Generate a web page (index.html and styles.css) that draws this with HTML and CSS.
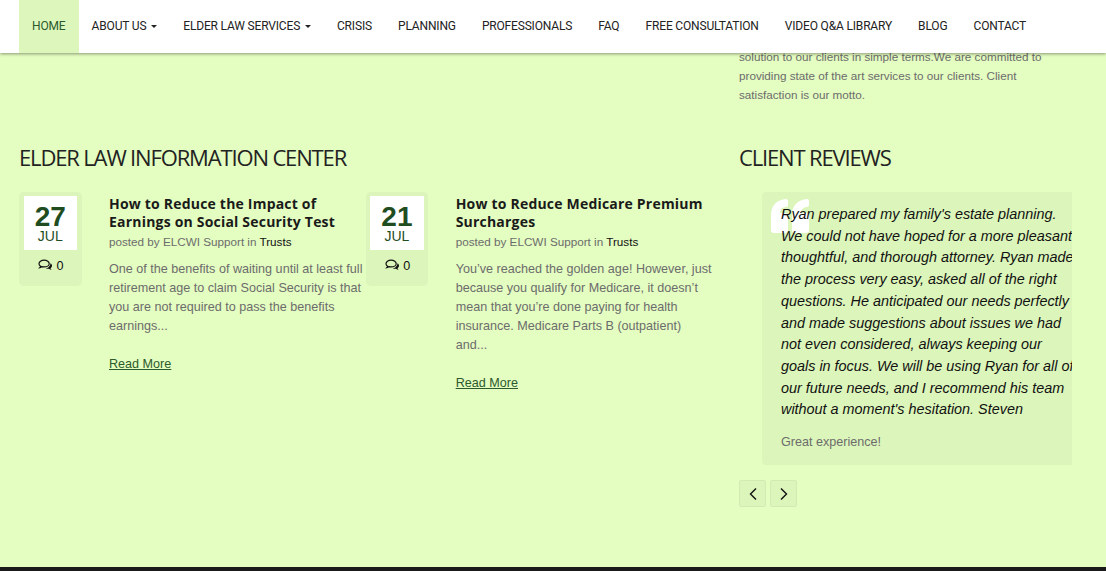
FILE: index.html
```html
<!DOCTYPE html>
<html lang="en">
<head>
  <meta charset="UTF-8">
  <meta name="viewport" content="width=device-width, initial-scale=1.0">
  <title>Elder Law Information Center</title>
  <link rel="stylesheet" href="styles.css">
</head>
<body>

  <nav class="navbar">
    <a class="nav-link active" href="#">HOME</a>
    <a class="nav-link" href="#">ABOUT US <span class="caret"></span></a>
    <a class="nav-link" href="#">ELDER LAW SERVICES <span class="caret"></span></a>
    <a class="nav-link" href="#">CRISIS</a>
    <a class="nav-link" href="#">PLANNING</a>
    <a class="nav-link" href="#">PROFESSIONALS</a>
    <a class="nav-link" href="#">FAQ</a>
    <a class="nav-link" href="#">FREE CONSULTATION</a>
    <a class="nav-link" href="#">VIDEO Q&amp;A LIBRARY</a>
    <a class="nav-link" href="#">BLOG</a>
    <a class="nav-link" href="#">CONTACT</a>
  </nav>

  <main class="page">
    <p class="intro">solution to our clients in simple terms.We are committed to providing state of the art services to our clients. Client satisfaction is our motto.</p>

    <div class="columns">
      <section>
        <h2 class="section-title">ELDER LAW INFORMATION CENTER</h2>
        <div class="posts">
          <article class="post">
            <div class="date-box">
              <div class="date">
                <span class="day">27</span>
                <span class="month">JUL</span>
              </div>
              <div class="comments">
                <svg class="comment-icon" viewBox="0 0 16 14" aria-hidden="true"><path d="M6.5 1.2C3.4 1.2 1 2.9 1 5c0 1.1.7 2.1 1.8 2.8-.2.6-.5 1.1-.9 1.5 1-.2 1.8-.6 2.5-1.1.7.2 1.4.3 2.1.3 3.1 0 5.5-1.7 5.5-3.5S9.600 1.2 6.5 1.2z" fill="none" stroke="#111" stroke-width="1.3"/><path d="M13.3 4.6c1.1.7 1.7 1.6 1.7 2.7 0 1-.6 1.9-1.6 2.6.2.7.6 1.4 1.3 2-1.2-.2-2.3-.7-3.1-1.4-.9.2-2.4.1-3.4-.4 2.6-.2 5.1-2.3 5.1-5.5z" fill="#111"/></svg>
                0
              </div>
            </div>
            <div class="post-body">
              <h3 class="post-title">How to Reduce the Impact of Earnings on Social Security Test</h3>
              <p class="meta">posted by ELCWI Support in <a href="#">Trusts</a></p>
              <p class="excerpt">One of the benefits of waiting until at least full retirement age to claim Social Security is that you are not required to pass the benefits earnings...</p>
              <a class="read-more" href="#">Read More</a>
            </div>
          </article>

          <article class="post">
            <div class="date-box">
              <div class="date">
                <span class="day">21</span>
                <span class="month">JUL</span>
              </div>
              <div class="comments">
                <svg class="comment-icon" viewBox="0 0 16 14" aria-hidden="true"><path d="M6.5 1.2C3.4 1.2 1 2.9 1 5c0 1.1.7 2.1 1.8 2.8-.2.6-.5 1.1-.9 1.5 1-.2 1.8-.6 2.5-1.1.7.2 1.4.3 2.1.3 3.1 0 5.5-1.7 5.5-3.5S9.600 1.2 6.5 1.2z" fill="none" stroke="#111" stroke-width="1.3"/><path d="M13.3 4.6c1.1.7 1.7 1.6 1.7 2.7 0 1-.6 1.9-1.6 2.6.2.7.6 1.4 1.3 2-1.2-.2-2.3-.7-3.1-1.4-.9.2-2.4.1-3.4-.4 2.6-.2 5.1-2.3 5.1-5.5z" fill="#111"/></svg>
                0
              </div>
            </div>
            <div class="post-body">
              <h3 class="post-title">How to Reduce Medicare Premium Surcharges</h3>
              <p class="meta">posted by ELCWI Support in <a href="#">Trusts</a></p>
              <p class="excerpt">You’ve reached the golden age! However, just because you qualify for Medicare, it doesn’t mean that you’re done paying for health insurance. Medicare Parts B (outpatient) and...</p>
              <a class="read-more" href="#">Read More</a>
            </div>
          </article>
        </div>
      </section>

      <section class="reviews">
        <h2 class="section-title">CLIENT REVIEWS</h2>
        <div class="review-card">
          <svg class="quote-mark" viewBox="0 0 38 34" aria-hidden="true"><path d="M0 16C0 6 6 1 15 0q2 0 2 2v4q0 2-2 2c-4 0-6 3-6 6h5q3 0 3 3v14q0 3-3 3H3q-3 0-3-3zM21 16c0-10 6-15 15-16q2 0 2 2v4q0 2-2 2c-4 0-6 3-6 6h5q3 0 3 3v14q0 3-3 3H24q-3 0-3-3z" fill="#fff"/></svg>
          <p class="review-text">Ryan prepared my family's estate planning. We could not have hoped for a more pleasant, thoughtful, and thorough attorney. Ryan made the process very easy, asked all of the right questions. He anticipated our needs perfectly and made suggestions about issues we had not even considered, always keeping our goals in focus. We will be using Ryan for all of our future needs, and I recommend his team without a moment's hesitation. Steven</p>
          <p class="review-title">Great experience!</p>
        </div>
        <div class="carousel-btns">
          <button class="carousel-btn"><svg viewBox="0 0 10 14" aria-hidden="true"><path d="M8 1.5 2.5 7 8 12.5" fill="none" stroke="#111" stroke-width="1.4"/></svg></button>
          <button class="carousel-btn"><svg viewBox="0 0 10 14" aria-hidden="true"><path d="M2 1.5 7.5 7 2 12.5" fill="none" stroke="#111" stroke-width="1.4"/></svg></button>
        </div>
      </section>
    </div>
  </main>

  <footer class="footer"></footer>

</body>
</html>
```

FILE: styles.css
```css
html, body {
  height: 100%;
  margin: 0;
  overflow: hidden;
}

body {
  display: flex;
  flex-direction: column;
  font-family: "Liberation Sans", Arial, sans-serif;
  font-size: 12.6px;
  line-height: 19px;
  background-color: #e4fdc1;
  color: #6c6c6c;
}

a {
  color: #111;
  text-decoration: none;
}

.navbar {
  position: absolute;
  top: 0;
  left: 0;
  right: 0;
  z-index: 10;
  display: flex;
  height: 53px;
  padding-left: 19px;
  background-color: #fff;
  box-shadow: 0 1px 3px rgba(0, 0, 0, 0.4);
}

.nav-link {
  display: block;
  padding: 0 13.05px;
  font-family: Roboto, sans-serif;
  font-size: 12px;
  line-height: 52px;
  letter-spacing: -0.17px;
  color: #222;
}

.nav-link.active {
  background-color: #ddf6bc;
  color: #2c5a2c;
}

.caret {
  display: inline-block;
  margin-left: 2px;
  vertical-align: middle;
  border-top: 3px solid #222;
  border-left: 3px solid transparent;
  border-right: 3px solid transparent;
}

.page {
  flex: 1;
  padding: 47px 34px 0 19px;
}

.intro {
  width: 320px;
  margin: 0 0 0 720px;
  font-size: 11.7px;
}

.columns {
  display: grid;
  grid-template-columns: 720px 333px;
  margin-top: 38px;
}

.section-title {
  margin: 0 0 20px;
  font-family: "Open Sans", sans-serif;
  font-size: 22px;
  font-weight: 400;
  line-height: 30px;
  letter-spacing: -1.15px;
  color: #222;
}

.posts {
  display: grid;
  grid-template-columns: 346.7px 347px;
  margin-top: 1px;
}

.post {
  display: flex;
  align-items: flex-start;
  gap: 27.5px;
}

.date-box {
  flex: none;
  box-sizing: border-box;
  width: 62.5px;
  height: 94px;
  padding: 4px 4.5px;
  border-radius: 5px;
  background-color: #dcf5ba;
  text-align: center;
}

.date {
  display: flex;
  flex-direction: column;
  align-items: center;
  height: 54px;
  background-color: #fff;
  color: #1f4d1f;
}

.day {
  margin-top: 8px;
  font-size: 28px;
  font-weight: 700;
  line-height: 26px;
}

.month {
  font-size: 14px;
  line-height: 13px;
}

.comments {
  margin-top: 7px;
  color: #111;
}

.comment-icon {
  width: 15px;
  height: 13px;
  margin-left: 1px;
  vertical-align: -2px;
}

.post-body {
  flex: 1;
  min-width: 0;
}

.post-title {
  margin: 3px 0 0;
  font-family: "Open Sans", sans-serif;
  font-size: 14px;
  font-weight: 700;
  line-height: 18px;
  letter-spacing: 0.2px;
  color: #1a1a1a;
}

.meta {
  margin: 1px 0 9px;
  font-size: 11.7px;
}

.excerpt {
  margin: 0 0 19px;
}

.read-more {
  color: #2c5a2c;
  text-decoration: underline;
}

.review-card {
  position: relative;
  box-sizing: border-box;
  height: 273px;
  margin-left: 23px;
  padding: 12px 0 0 19px;
  overflow: hidden;
  border-radius: 4px 0 0 4px;
  background-color: #dcf5ba;
}

.quote-mark {
  position: absolute;
  top: 7px;
  left: 9px;
  width: 38px;
  height: 34px;
}

.review-text {
  position: relative;
  width: 298px;
  margin: 0 0 12px;
  font-size: 14.4px;
  line-height: 21.7px;
  font-style: italic;
  color: #111;
}

.review-title {
  margin: 0;
}

.carousel-btns {
  display: flex;
  gap: 4px;
  margin-top: 15px;
}

.carousel-btn {
  display: flex;
  align-items: center;
  justify-content: center;
  width: 27px;
  height: 27px;
  padding: 0;
  border: 1px solid #d3eab3;
  border-radius: 2px;
  background-color: #dcf5ba;
}

.carousel-btn svg {
  width: 10px;
  height: 14px;
}

.footer {
  flex: none;
  height: 4px;
  background-color: #1a1a1a;
}
```
